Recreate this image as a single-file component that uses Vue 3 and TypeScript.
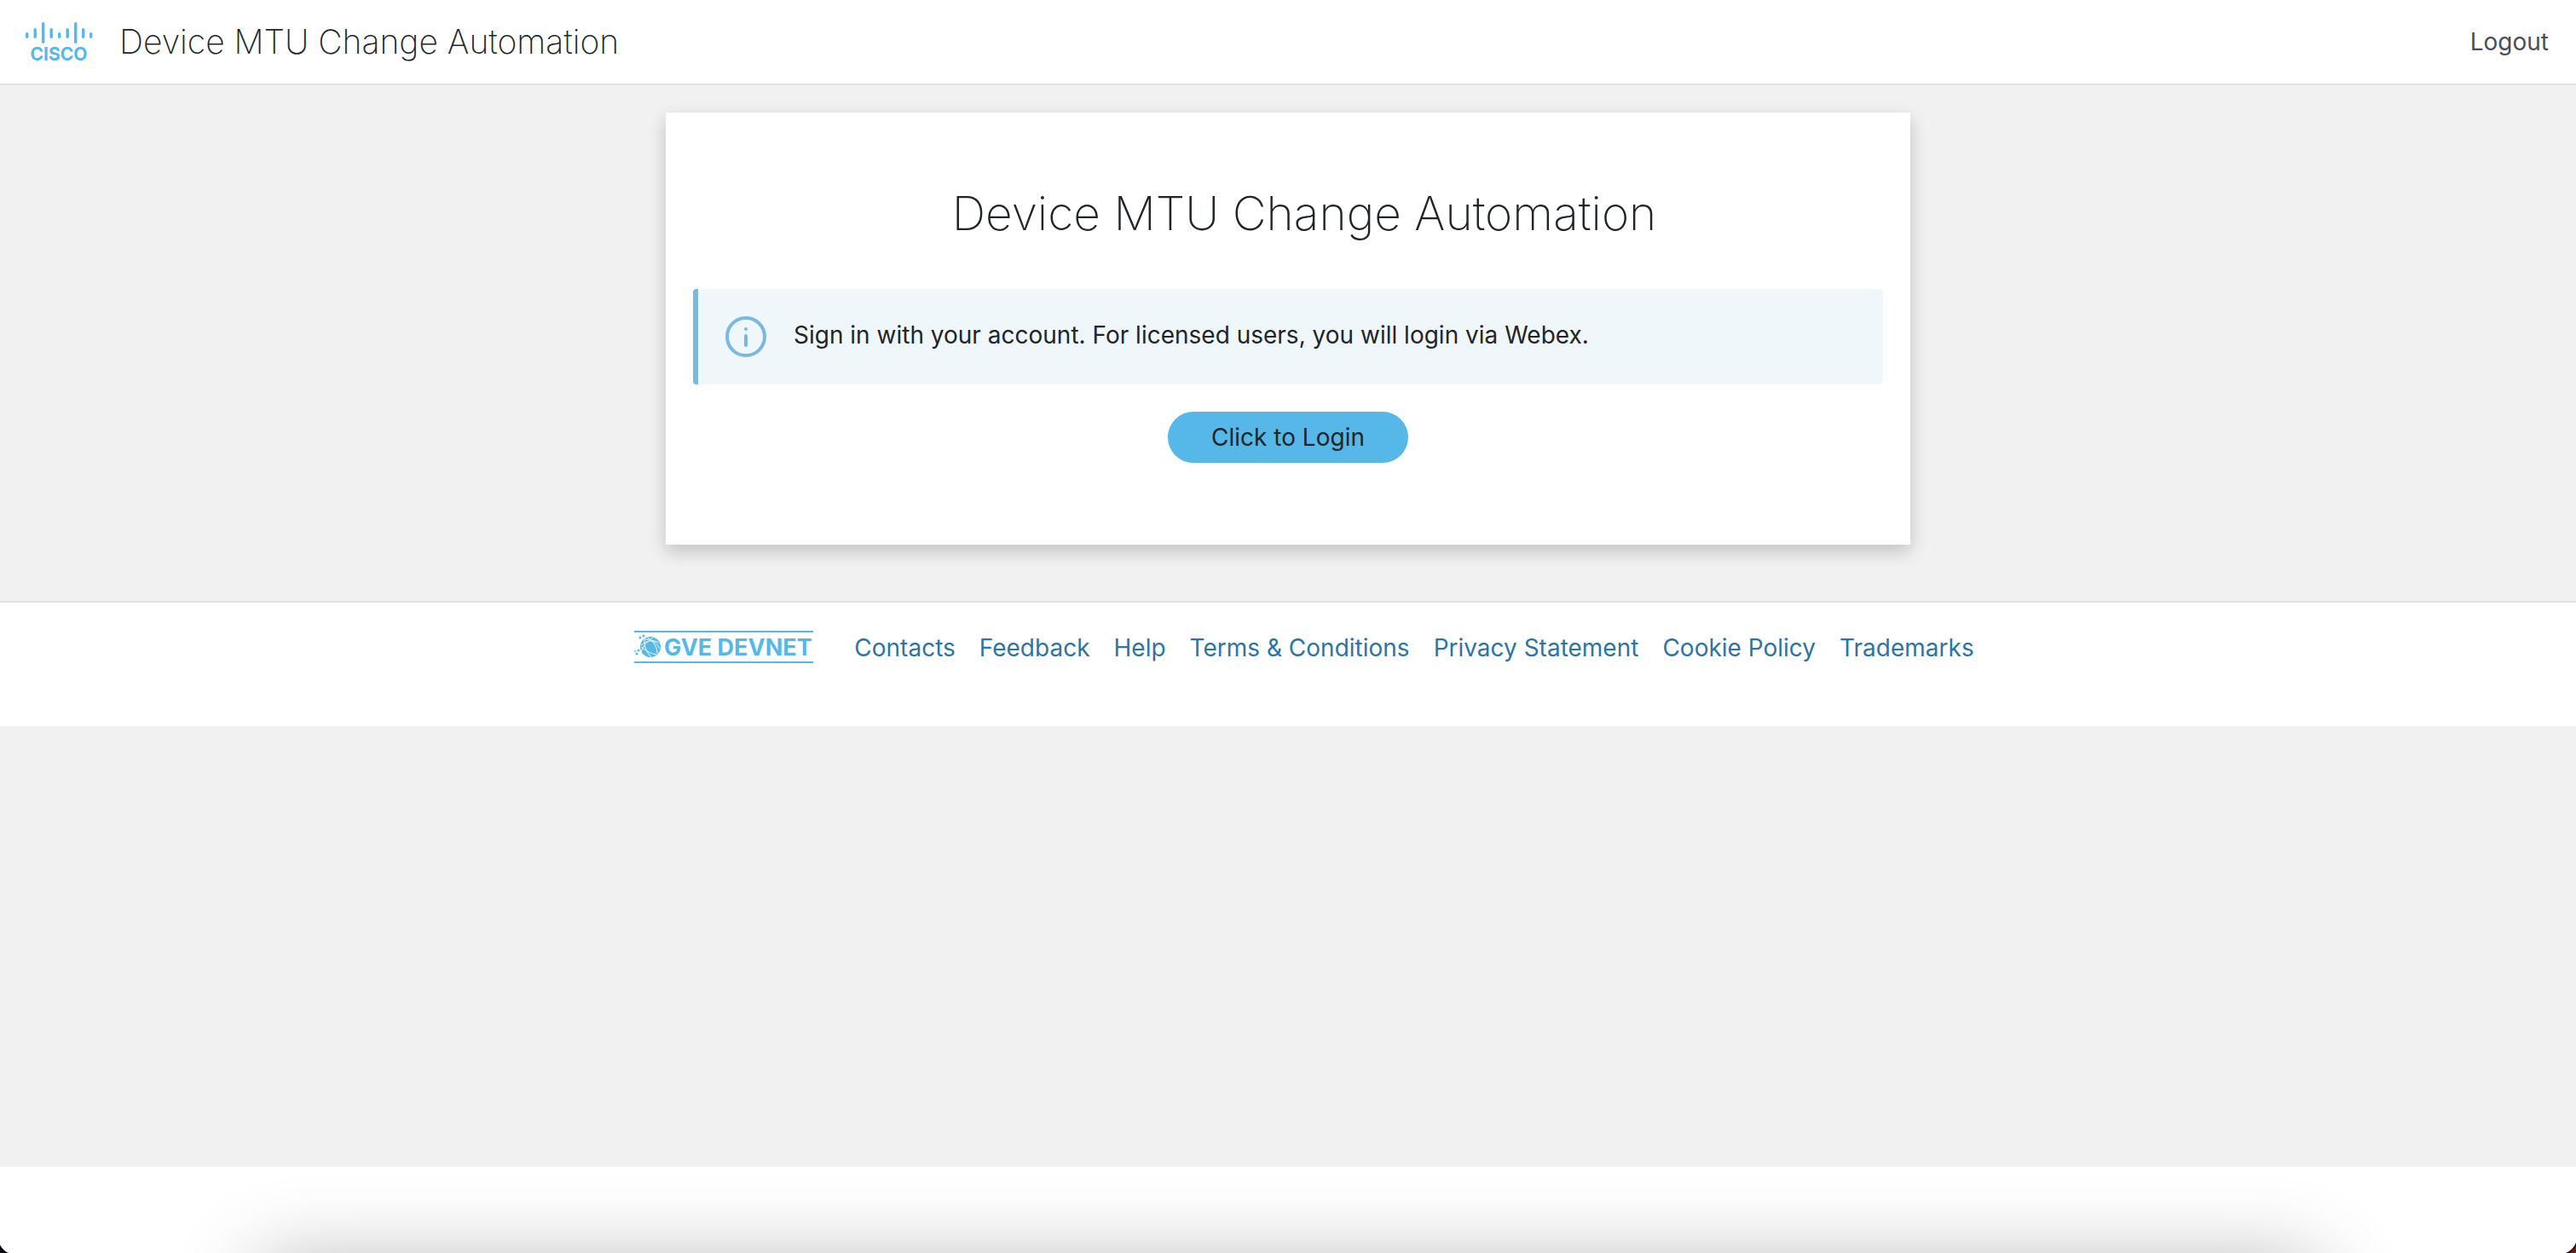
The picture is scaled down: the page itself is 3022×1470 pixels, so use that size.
<script setup lang="ts">
import { ref } from 'vue'

interface Bar {
  x: number
  y: number
  h: number
}

const title = 'Device MTU Change Automation'
const message = ref('Sign in with your account. For licensed users, you will login via Webex.')
const links: string[] = [
  'Contacts',
  'Feedback',
  'Help',
  'Terms & Conditions',
  'Privacy Statement',
  'Cookie Policy',
  'Trademarks',
]

const bars: Bar[] = [
  { x: 0, y: 12, h: 7 },
  { x: 9.5, y: 7, h: 12 },
  { x: 19, y: 0, h: 25 },
  { x: 28.5, y: 7, h: 12 },
  { x: 38, y: 12, h: 7 },
  { x: 47.5, y: 7, h: 12 },
  { x: 57, y: 0, h: 25 },
  { x: 66, y: 7, h: 12 },
  { x: 75, y: 12, h: 7 },
]
</script>

<template>
  <div class="page">
    <header class="header">
      <a class="brand" href="#" aria-label="Cisco">
        <svg class="cisco" viewBox="0 0 78 46" aria-hidden="true">
          <rect v-for="bar in bars" :key="bar.x" :x="bar.x" :y="bar.y" width="3.4" :height="bar.h" rx="1.7" />
          <text x="39" y="45" text-anchor="middle">CISCO</text>
        </svg>
      </a>
      <span class="app-name">{{ title }}</span>
      <a class="logout" href="#">Logout</a>
    </header>

    <main class="main">
      <section class="card">
        <h1 class="card-title">{{ title }}</h1>
        <div class="alert" role="status">
          <svg class="info" viewBox="0 0 48 48" aria-hidden="true">
            <circle cx="24" cy="24" r="22" fill="none" stroke="currentColor" stroke-width="4" />
            <circle cx="24" cy="15" r="2" fill="currentColor" />
            <rect x="22" y="21" width="4" height="15" rx="2" fill="currentColor" />
          </svg>
          <p class="message">{{ message }}</p>
        </div>
        <button class="login" type="button">Click to Login</button>
      </section>
    </main>

    <footer class="footer">
      <svg class="devnet" viewBox="0 0 210 40" role="img" aria-label="GVE DEVNET">
        <rect x="0" y="1" width="210" height="2" />
        <rect x="0" y="37" width="210" height="2" />
        <circle cx="19" cy="20" r="12" />
        <g fill="none" stroke="#fff" stroke-width="0.9">
          <path d="M12 11 Q24 10 30 22" />
          <path d="M8 18 Q19 9 29 15" />
          <path d="M12 11 Q11 23 20 32" />
          <path d="M22 9 Q11 16 8 26" />
          <path d="M8 20 Q18 28 26 29" />
          <path d="M16 9 Q28 18 27 28" />
        </g>
        <circle cx="7" cy="9" r="1.500" />
        <circle cx="11" cy="7" r="1.500" />
        <circle cx="1" cy="25" r="1" />
        <circle cx="5" cy="24" r="1.500" />
        <circle cx="3" cy="28" r="1.500" />
        <text x="35" y="30">GVE DEVNET</text>
      </svg>
      <nav class="links" aria-label="Footer">
        <a v-for="link in links" :key="link" href="#">{{ link }}</a>
      </nav>
    </footer>

    <div class="base">
      <div class="dock-shadow"></div>
      <div class="corner left"></div>
      <div class="corner right"></div>
    </div>
  </div>
</template>

<style>
body {
  margin: 0;
  background: #fff;
}
</style>

<style scoped>
.page {
  display: flex;
  flex-direction: column;
  min-height: 100vh;
  background: #f1f1f1;
  color: #212529;
  font-family: Inter, "Liberation Sans", sans-serif;
  font-size: 28px;
  line-height: 40px;
}

.header {
  display: flex;
  align-items: center;
  height: 98px;
  padding: 0 32px 0 30px;
  background: #fff;
  border-bottom: 2px solid #dee2e6;
}

.brand {
  display: flex;
}

.cisco {
  width: 78px;
  height: 46px;
  fill: #55b8e8;
  overflow: visible;
}

.cisco text {
  font-family: Inter, sans-serif;
  font-size: 21px;
  font-weight: 700;
}

.app-name {
  margin-left: 32px;
  font-size: 39px;
  font-weight: 200;
}

.logout {
  margin-left: auto;
  color: #495057;
  text-decoration: none;
}

.main {
  display: flex;
  justify-content: center;
  padding: 32px 32px 66px;
}

.card {
  box-sizing: border-box;
  display: flex;
  flex-direction: column;
  align-items: center;
  width: 100%;
  max-width: 1460px;
  padding: 82px 32px 96px;
  background: #fff;
  box-shadow: 0 8px 20px rgba(0, 0, 0, 0.2);
}

.card-title {
  margin: 0 0 53px;
  padding-left: 38px;
  font-size: 55px;
  font-weight: 200;
  line-height: 72px;
}

.alert {
  box-sizing: border-box;
  display: flex;
  align-items: center;
  gap: 32px;
  width: 100%;
  padding: 32px;
  background: #eff7fb;
  border-left: 6px solid #7ab8e0;
  border-radius: 4px;
}

.info {
  flex: none;
  width: 48px;
  height: 48px;
  color: #7ab8e0;
}

.message {
  margin: 0 0 4px;
}

.login {
  margin-top: 32px;
  padding: 10px 51px;
  color: #212529;
  background: #55b8e8;
  border: 0;
  border-radius: 30px;
  font: inherit;
}

.footer {
  display: flex;
  justify-content: center;
  align-items: flex-start;
  gap: 48px;
  padding: 32px 0 73px 38px;
  background: #fff;
  border-top: 2px solid #dee2e6;
}

.devnet {
  flex: none;
  width: 210px;
  height: 40px;
  fill: #55b8e8;
}

.devnet text {
  font-family: Inter, sans-serif;
  font-size: 27px;
  font-weight: 700;
}

.links {
  display: flex;
  gap: 28px;
  line-height: 42px;
  margin-bottom: -2px;
}

.links a {
  color: #2f74a0;
  text-decoration: none;
}

.base {
  position: relative;
  height: 101px;
  margin-top: auto;
  overflow: hidden;
  background: #fff;
}

.dock-shadow {
  position: absolute;
  top: 114px;
  right: 10%;
  left: 10%;
  height: 100px;
  border-radius: 20px;
  box-shadow: 0 0 100px rgba(0, 0, 0, 0.3);
}

.corner {
  position: absolute;
  bottom: 0;
  width: 20px;
  height: 20px;
}

.corner.left {
  left: 0;
  background: radial-gradient(circle at 100% 0, transparent 22px, #05090d 23px);
}

.corner.right {
  right: 0;
  background: radial-gradient(circle at 0 0, transparent 21px, #1a0505 22px, #6b1d14 24px);
}
</style>
